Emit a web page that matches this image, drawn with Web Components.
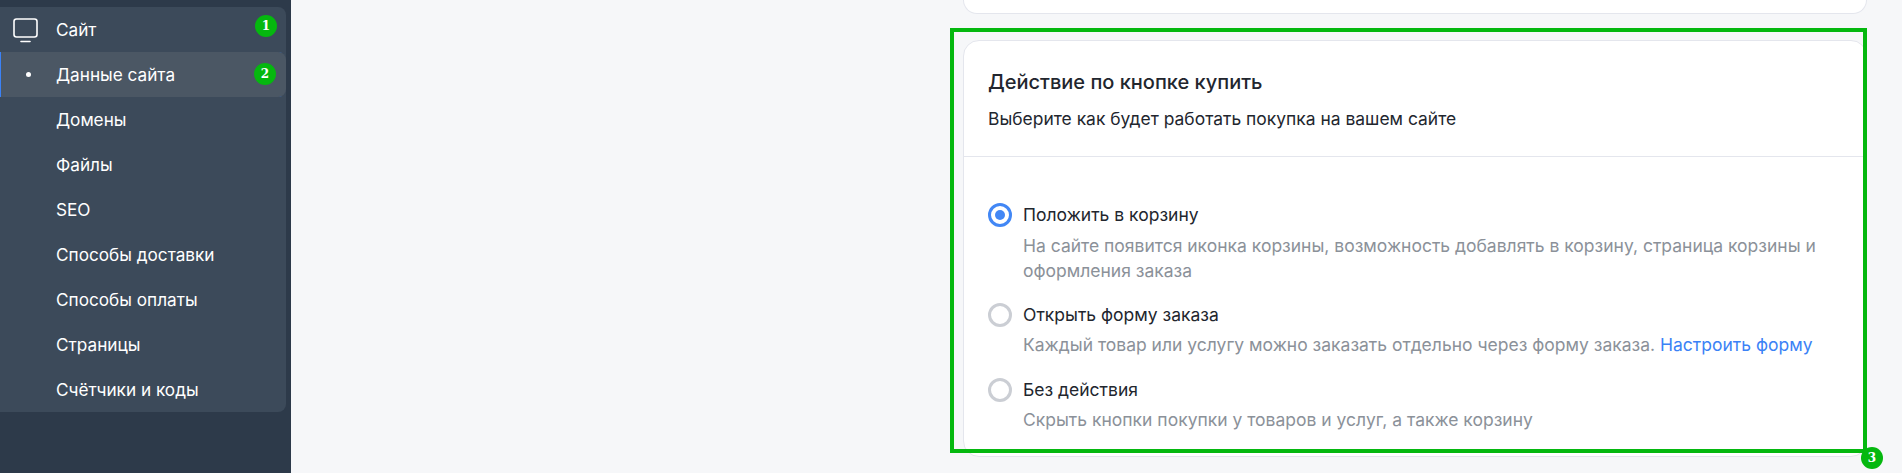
<!DOCTYPE html>
<html lang="ru">
<head>
<meta charset="utf-8">
<title>Действие по кнопке купить</title>
<style>
    html, body { margin: 0; height: 100%; overflow: hidden; background: #f6f7f9; font-family: Inter, "Noto Sans", sans-serif; }
</style>
</head>
<body>
<app-shell>
    <side-nav slot="side">
        <nav-item icon badge="1">Сайт</nav-item>
        <nav-item active badge="2">Данные сайта</nav-item>
        <nav-item>Домены</nav-item>
        <nav-item>Файлы</nav-item>
        <nav-item>SEO</nav-item>
        <nav-item>Способы доставки</nav-item>
        <nav-item>Способы оплаты</nav-item>
        <nav-item>Страницы</nav-item>
        <nav-item>Счётчики и коды</nav-item>
    </side-nav>
    <settings-card heading="Действие по кнопке купить" note="Выберите как будет работать покупка на вашем сайте">
        <radio-option checked label="Положить в корзину">На сайте появится иконка корзины, возможность добавлять в корзину, страница корзины и оформления заказа</radio-option>
        <radio-option label="Открыть форму заказа">Каждый товар или услугу можно заказать отдельно через форму заказа. <a href="#form" style="color:#3b82f6;text-decoration:none">Настроить форму</a></radio-option>
        <radio-option label="Без действия">Скрыть кнопки покупки у товаров и услуг, а также корзину</radio-option>
    </settings-card>
</app-shell>

<script>
class AppShell extends HTMLElement {
    constructor() {
        super();
        this.attachShadow({ mode: 'open' });
        this.shadowRoot.innerHTML = `
            <style>
                :host { display: flex; height: 473px; overflow: hidden; }
                aside { width: 291px; flex: none; background: #2d3a4a; padding-top: 7px; box-sizing: border-box; }
                main { flex: 1; padding-left: 672px; padding-right: 35px; min-width: 0; }
                .prev { height: 14px; box-sizing: border-box; background: #fff; border: 1px solid #e4e6ed; border-top: 0; border-radius: 0 0 16px 16px; margin-bottom: 26px; }
            </style>
            <aside><slot name="side"></slot></aside>
            <main>
                <div class="prev"></div>
                <slot></slot>
            </main>
        `;
    }
}

class SideNav extends HTMLElement {
    constructor() {
        super();
        this.attachShadow({ mode: 'open' });
        this.shadowRoot.innerHTML = `
            <style>
                :host { display: block; width: 286px; background: #3c4a5a; border-radius: 0 8px 8px 0; }
            </style>
            <slot></slot>
        `;
    }
}

class MarkerBadge extends HTMLElement {
    constructor() {
        super();
        this.attachShadow({ mode: 'open' });
        this.shadowRoot.innerHTML = `
            <style>
                :host {
                    position: absolute; display: flex; align-items: center; justify-content: center;
                    width: 22px; height: 22px; border-radius: 50%;
                    background: #05b80f; color: #fff;
                    font: bold 12px "DejaVu Serif", serif;
                }
            </style>
            <slot></slot>
        `;
    }
}

class NavItem extends HTMLElement {
    constructor() {
        super();
        this.attachShadow({ mode: 'open' });
        const icon = this.hasAttribute('icon') ? `
            <svg class="icon" width="26" height="26" viewBox="0 0 26 26" fill="none" stroke="#fff" stroke-width="1.6">
                <rect x="1" y="1" width="23" height="18" rx="2.5"/>
                <path d="M8 23.5h9" stroke-linecap="round"/>
            </svg>` : '';
        const bullet = this.hasAttribute('active') ? '<span class="dot"></span>' : '';
        const num = this.getAttribute('badge');
        this.shadowRoot.innerHTML = `
            <style>
                :host {
                    display: flex; align-items: center; position: relative;
                    height: 45px; padding-left: 56px; box-sizing: border-box;
                    color: #fff; font-size: 17.2px;
                }
                :host([active]) { background: #4b5764; border-radius: 0 8px 8px 0; box-shadow: inset 1px 0 0 #3b82f6; }
                .icon { position: absolute; left: 13px; top: 11px; }
                .dot { position: absolute; left: 26px; top: 20px; width: 5px; height: 5px; border-radius: 50%; background: #fff; }
                marker-badge { right: 9px; top: 8px; }
                :host([active]) marker-badge { right: 10px; top: 11px; }
            </style>
            ${icon}${bullet}<slot></slot>
            ${num ? `<marker-badge>${num}</marker-badge>` : ''}
        `;
    }
}

class SettingsCard extends HTMLElement {
    constructor() {
        super();
        this.attachShadow({ mode: 'open' });
        this.shadowRoot.innerHTML = `
            <style>
                :host { display: block; position: relative; }
                .card { background: #fff; border: 1px solid #e4e6ed; border-radius: 16px; height: 417px; box-sizing: border-box; }
                header { height: 116px; box-sizing: border-box; padding: 28px 24px 0; border-bottom: 1px solid #e4e6ed; }
                h2 { margin: 0 0 12px; font-size: 20px; line-height: 26px; font-weight: 500; color: #22262e; }
                p { margin: 0; font-size: 17.45px; line-height: 24px; color: #22262e; }
                .body { padding: 45px 40px 0 24px; }
                .frame { position: absolute; left: -13px; top: -12px; width: 917px; height: 425px; box-sizing: border-box; border: 4px solid #05b80f; pointer-events: none; }
                marker-badge { left: 898px; top: 407px; }
            </style>
            <div class="card">
                <header>
                    <h2>${this.getAttribute('heading')}</h2>
                    <p>${this.getAttribute('note')}</p>
                </header>
                <div class="body"><slot></slot></div>
            </div>
            <div class="frame"></div>
            <marker-badge>3</marker-badge>
        `;
    }
}

class RadioOption extends HTMLElement {
    constructor() {
        super();
        this.attachShadow({ mode: 'open' });
        this.shadowRoot.innerHTML = `
            <style>
                :host { display: grid; grid-template-columns: 24px 1fr; column-gap: 11px; margin-bottom: 19.4px; }
                .ring { width: 24px; height: 24px; box-sizing: border-box; border-radius: 50%; border: 3px solid #cbced4; display: flex; align-items: center; justify-content: center; margin-top: 1px; }
                :host([checked]) .ring { border-color: #4287f5; }
                :host([checked]) .ring::after { content: ""; width: 10px; height: 10px; border-radius: 50%; background: #4287f5; }
                .label { font-size: 17.5px; line-height: 25px; color: #22262e; margin-bottom: 5.5px; }
                .desc { font-size: 17.5px; line-height: 25px; color: #8b9199; }
            </style>
            <div class="ring"></div>
            <div>
                <div class="label">${this.getAttribute('label')}</div>
                <div class="desc"><slot></slot></div>
            </div>
        `;
    }
}

customElements.define('app-shell', AppShell);
customElements.define('side-nav', SideNav);
customElements.define('marker-badge', MarkerBadge);
customElements.define('nav-item', NavItem);
customElements.define('settings-card', SettingsCard);
customElements.define('radio-option', RadioOption);
</script>
</body>
</html>
